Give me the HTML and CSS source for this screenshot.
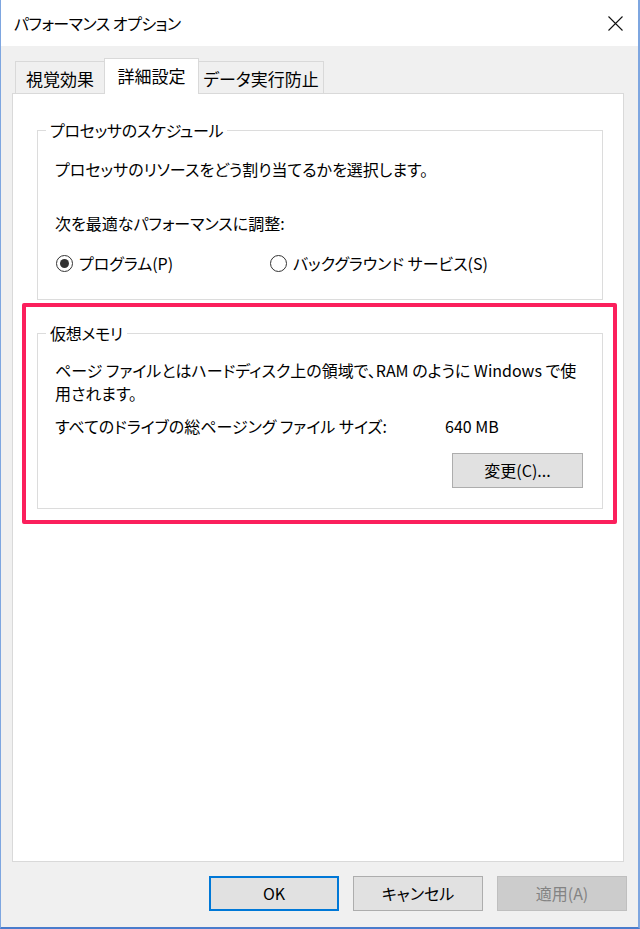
FILE: index.html
```html
<!DOCTYPE html>
<html lang="ja">
<head>
<meta charset="utf-8">
<title>パフォーマンス オプション</title>
<link rel="stylesheet" href="styles.css">
</head>
<body>
<div class="window">
  <div class="titlebar">
    <span class="title">パフォーマンス オプション</span>
    <svg class="close" width="15" height="15" viewBox="0 0 15 15"><path d="M0.5 0.5 L14.5 14.5 M14.5 0.5 L0.5 14.5" stroke="#111" stroke-width="1.1" fill="none"/></svg>
  </div>
  <div class="client">
    <div class="tabs">
      <div class="tab t1">視覚効果</div>
      <div class="tab t2 selected">詳細設定</div>
      <div class="tab t3">データ実行防止</div>
    </div>
    <div class="panel">
      <div class="group g1">
        <div class="legend">プロセッサのスケジュール</div>
        <div class="line l1">プロセッサのリソースをどう割り当てるかを選択します。</div>
        <div class="line l2">次を最適なパフォーマンスに調整:</div>
        <div class="radios">
          <div class="radio first"><span class="dot checked"></span><span class="rlabel">プログラム(P)</span></div>
          <div class="radio"><span class="dot"></span><span class="rlabel">バックグラウンド サービス(S)</span></div>
        </div>
      </div>
      <div class="highlight">
        <div class="group g2">
          <div class="legend">仮想メモリ</div>
          <div class="line l3"><span class="nw">ページ ファイルとはハードディスク上の領域で、RAM のように Windows で使</span><br><span class="nw">用されます。</span></div>
          <div class="sizerow"><span class="sizelabel">すべてのドライブの総ページング ファイル サイズ:</span><span>640 MB</span></div>
          <div class="btnrow"><div class="btn change">変更(C)...</div></div>
        </div>
      </div>
    </div>
    <div class="footer">
      <div class="btn ok">OK</div>
      <div class="btn">キャンセル</div>
      <div class="btn disabled">適用(A)</div>
    </div>
  </div>
</div>
</body>
</html>
```

FILE: styles.css
```css
html, body {
  margin: 0;
  padding: 0;
}
body {
  font-family: "Noto Sans CJK JP", "Noto Sans", sans-serif;
  font-feature-settings: "palt";
  font-size: 16px;
  color: #000;
  background: #f0f0f0;
}
.window {
  width: 640px;
  height: 929px;
  box-sizing: border-box;
  border-left: 1px solid #7ea6e0;
  border-right: 2px solid #7ea6e0;
  border-bottom: 2px solid #4a7ccc;
  background: #f0f0f0;
  display: flex;
  flex-direction: column;
}
.titlebar {
  height: 46px;
  flex: none;
  background: #fff;
  display: flex;
  align-items: center;
  justify-content: space-between;
  padding: 0 15px 0 13px;
}
.title {
  font-size: 16px;
  letter-spacing: -0.5px;
  line-height: 21px;
}
.close {
  display: block;
}
.client {
  flex: 1;
  padding: 12px 14px 0 11px;
  display: flex;
  flex-direction: column;
}
.tabs {
  display: flex;
  align-items: flex-end;
  height: 35px;
  padding-left: 3px;
  position: relative;
  z-index: 1;
}
.tab {
  box-sizing: border-box;
  height: 32px;
  border: 1px solid #d9d9d9;
  border-bottom: none;
  background: #f0f0f0;
  display: flex;
  align-items: center;
  justify-content: center;
  font-size: 17px;
  line-height: 21px;
  padding-top: 1px;
}
.t1 { width: 89px; border-right: none; }
.t2 { width: 95px; }
.t3 { width: 125px; border-left: none; }
.tab.selected {
  height: 36px;
  background: #fff;
  margin-bottom: -1px;
  padding-top: 0;
  padding-bottom: 3px;
}
.panel {
  box-sizing: border-box;
  height: 769px;
  flex: none;
  background: #fff;
  border: 1px solid #d9d9d9;
  padding: 36px 6px 0 9px;
}
.group {
  border: 1px solid #dcdcdc;
  padding: 0 18px 0 17px;
}
.g1 {
  margin: 0 14px 0 15px;
  padding-bottom: 25px;
}
.legend {
  width: fit-content;
  line-height: 21px;
  margin: -11px 0 0 -9px;
  padding: 0 4px;
  background: #fff;
  letter-spacing: -0.3px;
}
.line {
  line-height: 21px;
}
.l1 { margin-top: 18px; }
.l2 { margin-top: 33px; }
.radios {
  display: flex;
  align-items: center;
  margin-top: 19px;
  line-height: 21px;
  padding-left: 1px;
}
.radio {
  display: flex;
  align-items: center;
}
.radio.first {
  width: 214px;
}
.dot {
  box-sizing: border-box;
  width: 17px;
  height: 17px;
  border: 1px solid #333;
  border-radius: 50%;
  display: flex;
  align-items: center;
  justify-content: center;
  margin-right: 6px;
  background: #fff;
}
.dot.checked::after {
  content: "";
  width: 9px;
  height: 9px;
  border-radius: 50%;
  background: #333;
}
.highlight {
  margin-top: 3px;
  border: 4px solid #fb1f5c;
  border-radius: 2px;
  padding: 26px 10px 11px 11px;
}
.g2 {
  padding-bottom: 20px;
}
.line.l3 {
  margin-top: 15px;
  line-height: 23px;
}
.nw { white-space: nowrap; }
.sizerow {
  display: flex;
  margin-top: 11px;
  line-height: 21px;
}
.sizelabel {
  width: 390px;
  flex: none;
  white-space: nowrap;
}
.btnrow {
  display: flex;
  justify-content: flex-end;
  margin-top: 16px;
  margin-right: 1px;
}
.btn {
  box-sizing: border-box;
  width: 130px;
  height: 35px;
  background: #e1e1e1;
  border: 1px solid #adadad;
  display: flex;
  align-items: center;
  justify-content: center;
  line-height: 21px;
}
.change {
  width: 131px;
}
.footer {
  display: flex;
  justify-content: flex-end;
  gap: 14px;
  margin-top: 14px;
  margin-right: -3px;
}
.btn.ok {
  border: 2px solid #0078d7;
}
.btn.disabled {
  background: #cccccc;
  border-color: #bfbfbf;
  color: #838383;
}
```
